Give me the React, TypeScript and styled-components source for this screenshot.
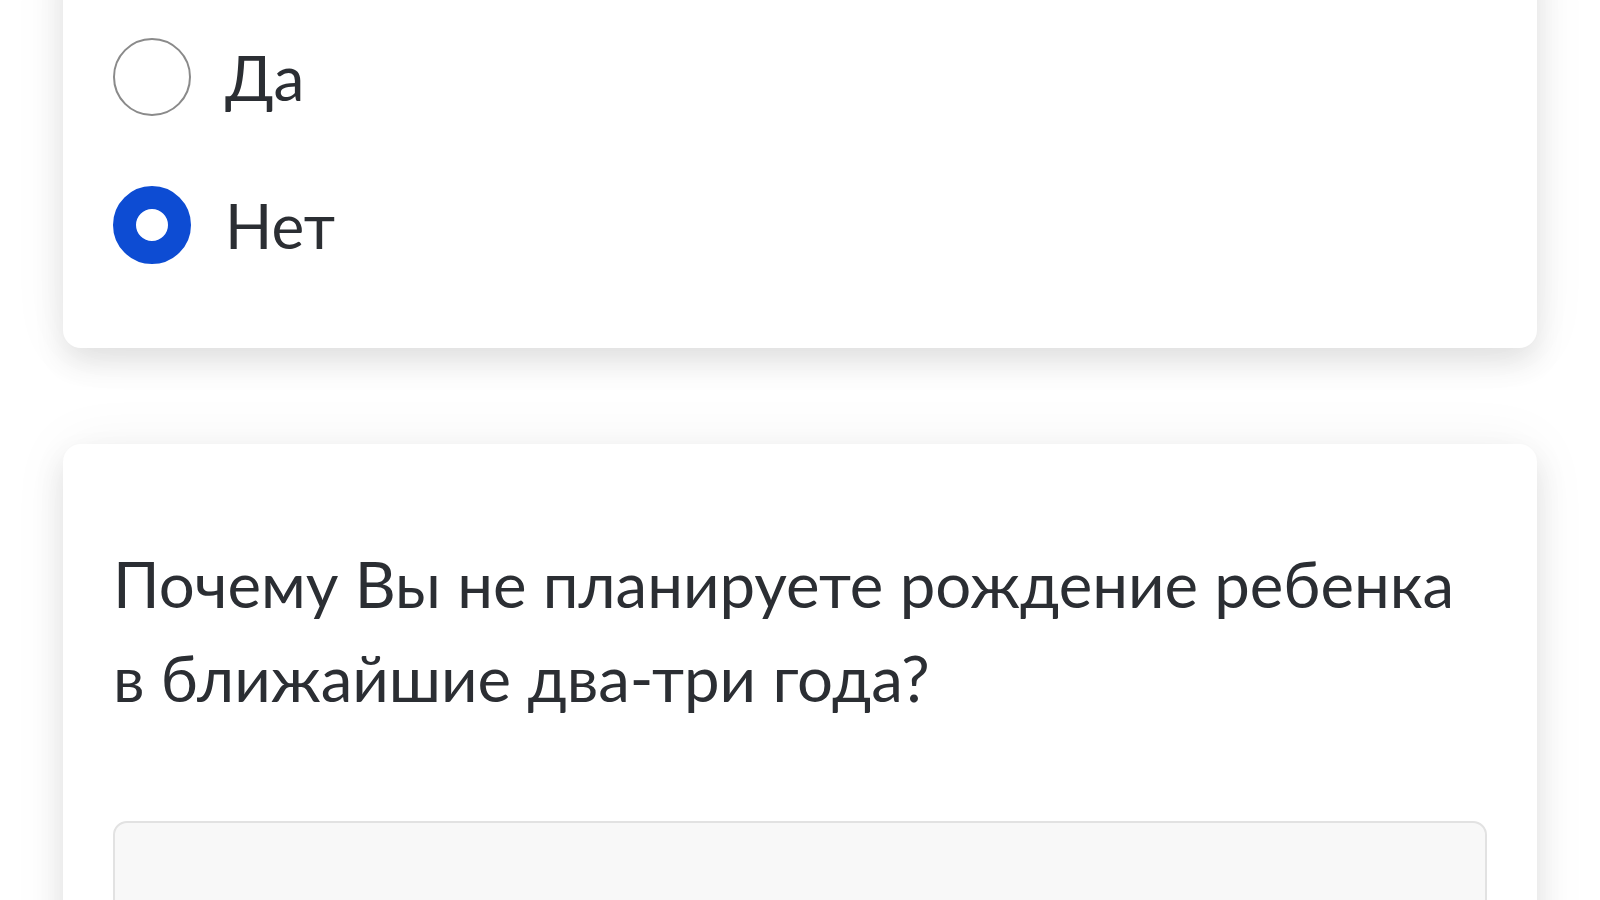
import React from 'react';
import styled, {createGlobalStyle} from 'styled-components';

const GlobalStyle = createGlobalStyle`
  html, body {
    margin: 0;
    padding: 0;
    background: #ffffff;
    overflow: hidden;
  }

  body {
    color: #2b2e33;
    font-family: Lato, 'Open Sans', sans-serif;
  }
`;

const Page = styled.main`
  display: flex;
  flex-direction: column;
  gap: 96px;
  margin-top: -58px;
  padding: 0 63px 0 63px;
`;

const Card = styled.section<{$top: number; $bottom: number}>`
  background: #ffffff;
  border-radius: 18px;
  box-shadow: 0 14px 30px rgba(0, 0, 0, 0.1), 0 0 60px rgba(0, 0, 0, 0.05);
  padding: ${(p) => p.$top}px 50px ${(p) => p.$bottom}px 50px;
`;

const Options = styled.div`
  display: flex;
  flex-direction: column;
  gap: 70px;
`;

const Option = styled.label`
  align-items: center;
  cursor: pointer;
  display: flex;
  gap: 34px;
  height: 78px;
`;

const Radio = styled.span<{$checked?: boolean}>`
  background: #ffffff;
  border: ${(p) => (p.$checked ? '23px solid #0d4cd3' : '2.5px solid #8a8a8a')};
  border-radius: 50%;
  box-sizing: border-box;
  flex: none;
  height: 78px;
  width: 78px;
`;

const OptionText = styled.span`
  font-size: 62px;
  line-height: 74px;
`;

const Question = styled.h2`
  font-size: 63.5px;
  font-weight: 400;
  line-height: 94px;
  margin: 0 0 96px;
`;

const Field = styled.div`
  background: #f8f8f8;
  border: 2px solid #e2e2e2;
  border-radius: 14px;
  height: 160px;
`;

const answers = [
  {label: 'Да', checked: false},
  {label: 'Нет', checked: true},
];

export default function App () {
  return (
    <>
      <GlobalStyle />
      <Page>
        <Card $top={96} $bottom={84}>
          <Options>
            {answers.map((a) => (
              <Option key={a.label}>
                <Radio $checked={a.checked} />
                <OptionText>{a.label}</OptionText>
              </Option>
            ))}
          </Options>
        </Card>

        <Card $top={93} $bottom={60}>
          <Question>
            Почему Вы не планируете рождение ребенка в ближайшие два-три года?
          </Question>
          <Field />
        </Card>
      </Page>
    </>
  );
}
